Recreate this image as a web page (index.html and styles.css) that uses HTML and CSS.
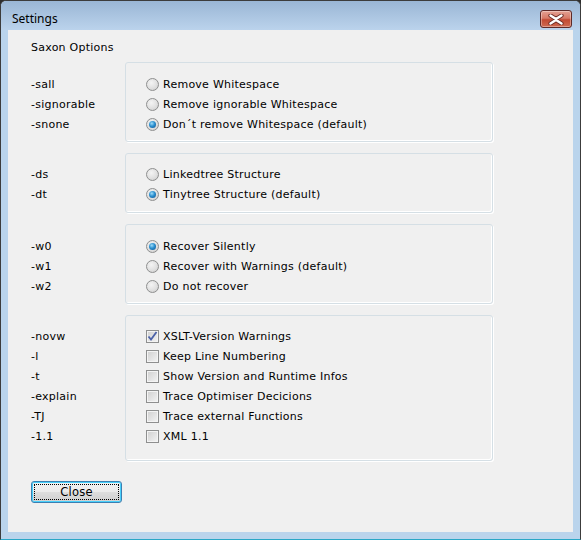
FILE: index.html
```html
<!DOCTYPE html>
<html>
<head>
<meta charset="utf-8">
<link rel="stylesheet" href="styles.css">
</head>
<body>
<div class="window">
  <div class="titlebar">
    <span class="title">Settings</span>
    <span class="closebtn"><svg width="18" height="11" viewBox="0 0 18 11"><path d="M3.5 1.5 L9 5 L14.5 1.5 M3.5 9.5 L9 6 L14.5 9.5" stroke="#6b2a24" stroke-width="4.2" fill="none" stroke-linecap="round"/><path d="M3.5 1.5 L9 5 L14.5 1.5 M3.5 9.5 L9 6 L14.5 9.5" stroke="#ffffff" stroke-width="2.4" fill="none" stroke-linecap="round"/></svg></span>
  </div>
  <div class="client">
    <div class="heading">Saxon Options</div>

    <div class="section">
      <div class="labels"><div class="row">-sall</div><div class="row">-signorable</div><div class="row">-snone</div></div>
      <div class="group">
        <div class="row"><span class="radio"></span>Remove Whitespace</div>
        <div class="row"><span class="radio"></span>Remove ignorable Whitespace</div>
        <div class="row"><span class="radio checked"></span>Don´t remove Whitespace (default)</div>
      </div>
    </div>

    <div class="section up">
      <div class="labels"><div class="row">-ds</div><div class="row">-dt</div></div>
      <div class="group">
        <div class="row"><span class="radio"></span>Linkedtree Structure</div>
        <div class="row"><span class="radio checked"></span>Tinytree Structure (default)</div>
      </div>
    </div>

    <div class="section">
      <div class="labels"><div class="row">-w0</div><div class="row">-w1</div><div class="row">-w2</div></div>
      <div class="group">
        <div class="row"><span class="radio checked"></span>Recover Silently</div>
        <div class="row"><span class="radio"></span>Recover with Warnings (default)</div>
        <div class="row"><span class="radio"></span>Do not recover</div>
      </div>
    </div>

    <div class="section up">
      <div class="labels"><div class="row">-novw</div><div class="row">-l</div><div class="row">-t</div><div class="row">-explain</div><div class="row">-TJ</div><div class="row">-1.1</div></div>
      <div class="group tall">
        <div class="row"><span class="check"><svg width="11" height="11" viewBox="0 0 11 11"><path d="M1.5 5.5 L4 8.5 L9.5 1" stroke="#4b61a8" stroke-width="1.8" fill="none"/></svg></span>XSLT-Version Warnings</div>
        <div class="row"><span class="check"></span>Keep Line Numbering</div>
        <div class="row"><span class="check"></span>Show Version and Runtime Infos</div>
        <div class="row"><span class="check"></span>Trace Optimiser Decicions</div>
        <div class="row"><span class="check"></span>Trace external Functions</div>
        <div class="row"><span class="check"></span>XML 1.1</div>
      </div>
    </div>

    <div class="buttons">
      <button class="btn"><span class="focus">Close</span></button>
    </div>
  </div>
</div>
</body>
</html>
```

FILE: styles.css
```css
html, body {
  margin: 0;
  padding: 0;
  background: #2e2e2e;
}
.window {
  width: 579px;
  height: 538px;
  border: 1px solid #3c3c3c;
  border-bottom-color: #2aa7c6;
  border-radius: 6px 6px 0 0;
  background: #bad4ec;
  display: flex;
  flex-direction: column;
  overflow: hidden;
}
.titlebar {
  height: 29px;
  flex: none;
  background: linear-gradient(#9ab6d5, #bbd3ec);
  display: flex;
  align-items: flex-start;
  justify-content: space-between;
  padding: 0 8px 0 11px;
}
.title {
  font-family: "Noto Sans", "Open Sans", sans-serif;
  font-size: 12px;
  color: #000;
  margin-top: 10px;
  line-height: 16px;
}
.closebtn {
  margin-top: 9px;
  width: 30px;
  height: 16px;
  border: 1px solid #5e2a28;
  border-radius: 3px;
  background: linear-gradient(#e4a193 0%, #d77a67 45%, #c24a33 55%, #cf6b52 100%);
  display: flex;
  align-items: center;
  justify-content: center;
  box-shadow: inset 0 0 0 1px rgba(255,255,255,0.35);
}
.client {
  flex: 1;
  margin: 0 7px 7px 7px;
  background: #f0f0f0;
  padding: 11px 0 0 23px;
  font-family: "DejaVu Sans", Verdana, sans-serif;
  font-size: 11px;
  letter-spacing: 0.25px;
  color: #000;
}
.heading {
  line-height: 14px;
  margin-bottom: 7px;
}
.section {
  display: flex;
  margin-bottom: 11px;
}
.labels {
  width: 94px;
  padding-top: 12px;
}
.row {
  height: 20px;
  display: flex;
  align-items: center;
  white-space: nowrap;
}
.group {
  width: 346px;
  border: 1px solid #d5dfe5;
  border-radius: 3px;
  box-shadow: inset -1px -1px 0 #fff, 1px 1px 0 #fff;
  padding: 11px 0 7px 20px;
}
.group.tall {
  padding-bottom: 13px;
}
.section.up .labels {
  padding-top: 11px;
}
.section.up .group {
  padding-top: 10px;
  padding-bottom: 8px;
}
.section.up .group.tall {
  padding-bottom: 14px;
}
.radio {
  width: 11px;
  height: 11px;
  border: 1px solid #8e8f8f;
  border-radius: 50%;
  background: radial-gradient(circle at 40% 35%, #f4f4f4 0%, #e0e0e0 55%, #c8c8c8 100%);
  margin-right: 4px;
  position: relative;
  flex: none;
}
.radio.checked::after {
  content: "";
  position: absolute;
  left: 2px;
  top: 2px;
  width: 7px;
  height: 7px;
  border-radius: 50%;
  background: radial-gradient(circle at 40% 35%, #9fdcf8 0%, #2a8fcf 45%, #0d4f8c 100%);
}
.check {
  width: 11px;
  height: 11px;
  border: 1px solid #8e8f8f;
  background: linear-gradient(135deg, #cfcfcf, #f4f4f4);
  box-shadow: inset 0 0 0 1px #f4f4f4;
  margin-right: 4px;
  flex: none;
  display: flex;
  align-items: center;
  justify-content: center;
}
.check svg {
  display: block;
}
.buttons {
  margin-top: 20px;
}
.btn {
  width: 91px;
  height: 22px;
  padding: 2px;
  border: 1px solid #3c7fb1;
  border-radius: 3px;
  background: linear-gradient(#f2f2f2 0%, #ebebeb 48%, #dddddd 52%, #cfcfcf 100%);
  box-shadow: inset 0 0 0 1px #48d0fb;
  font-family: "DejaVu Sans", Verdana, sans-serif;
  font-size: 11.5px;
  letter-spacing: 0.25px;
  color: #000;
  display: flex;
}
.focus {
  flex: 1;
  border: 1px dotted #000;
  display: flex;
  align-items: center;
  justify-content: center;
  line-height: 14px;
}
```
